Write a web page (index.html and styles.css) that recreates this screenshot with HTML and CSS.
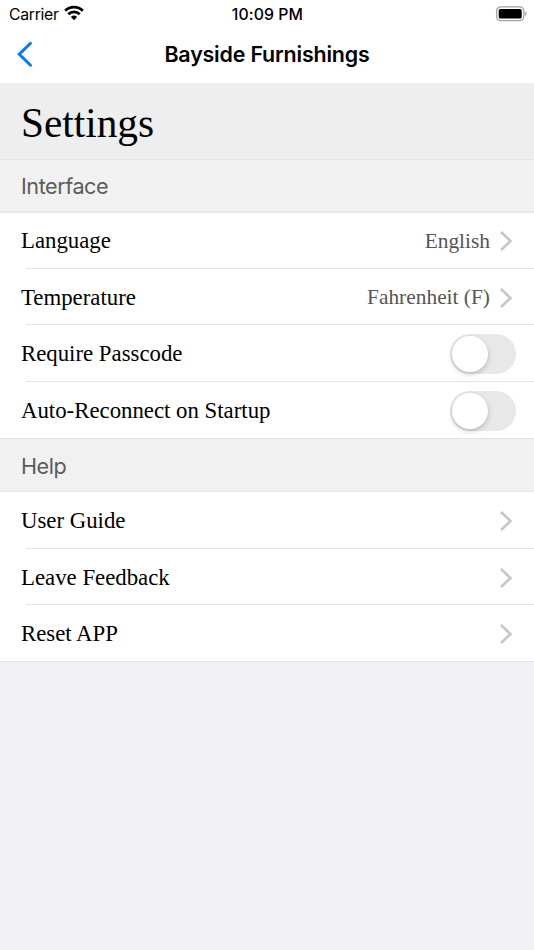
FILE: index.html
```
<!DOCTYPE html>
<html lang="en">
<head>
<meta charset="utf-8">
<title>Settings</title>
<link rel="stylesheet" href="styles.css">
</head>
<body>
<header class="top">
  <div class="status">
    <div class="carrier"><span class="carrier-name">Carrier</span>
      <svg class="wifi" width="20" height="16" viewBox="0 0 20 16" fill="none" stroke="#000" stroke-width="2.9"><path d="M1.2 5.7a12.6 12.6 0 0 1 17.6 0"/><path d="M4.3 9.2a8.2 8.2 0 0 1 11.4 0"/><path d="M10 15.2 6.9 12a4.5 4.5 0 0 1 6.2 0Z" fill="#000" stroke="none"/></svg>
    </div>
    <span class="time">10:09 PM</span>
    <svg class="battery" width="33" height="16" viewBox="0 0 33 16"><rect x="2.6" y=".8" width="27.2" height="13.8" rx="4" fill="none" stroke="#a3a3a3" stroke-width="1.3"/><rect x="4.7" y="2.9" width="23" height="9.6" rx="1.6" fill="#000"/><path d="M31.2 5.2c2.1.7 2.1 4.1 0 4.8Z" fill="#a3a3a3"/></svg>
  </div>
  <nav class="nav">
    <svg class="back" width="18" height="28" viewBox="0 0 18 28" fill="none" stroke="#007aff" stroke-width="3" stroke-linecap="round" stroke-linejoin="miter"><path d="M15.5 3.3 4.3 14.3l11.2 10.9"/></svg>
    <span class="title">Bayside Furnishings</span>
  </nav>
</header>
<main>
  <h1>Settings</h1>
  <h2>Interface</h2>
  <ul class="list">
    <li class="row"><span class="label">Language</span><span class="value">English</span><svg class="chevron" viewBox="0 0 14 22"><path d="m2 2 9.5 9L2 20"/></svg></li>
    <li class="row"><span class="label">Temperature</span><span class="value">Fahrenheit (F)</span><svg class="chevron" viewBox="0 0 14 22"><path d="m2 2 9.5 9L2 20"/></svg></li>
    <li class="row"><span class="label">Require Passcode</span><span class="switch"></span></li>
    <li class="row"><span class="label">Auto-Reconnect on Startup</span><span class="switch"></span></li>
  </ul>
  <h2 class="help">Help</h2>
  <ul class="list">
    <li class="row"><span class="label">User Guide</span><svg class="chevron" viewBox="0 0 14 22"><path d="m2 2 9.5 9L2 20"/></svg></li>
    <li class="row"><span class="label">Leave Feedback</span><svg class="chevron" viewBox="0 0 14 22"><path d="m2 2 9.5 9L2 20"/></svg></li>
    <li class="row"><span class="label">Reset APP</span><svg class="chevron" viewBox="0 0 14 22"><path d="m2 2 9.5 9L2 20"/></svg></li>
  </ul>
</main>
</body>
</html>
```
FILE: styles.css
```
* { box-sizing: border-box; }
body {
  margin: 0;
  min-height: 950px;
  background: #f2f1f6;
  color: #000;
  font-family: Inter, "Liberation Sans", sans-serif;
}
.top { height: 83px; background: #fff; }
.status {
  display: grid;
  grid-template-columns: 1fr auto 1fr;
  align-items: center;
  height: 28px;
  padding: 0 7px 0 9px;
}
.carrier { display: flex; align-items: center; gap: 5px; }
.carrier-name { font-size: 15.8px; letter-spacing: -0.3px; }
.wifi { margin-top: -2px; }
.time { margin-right: 1px; font-size: 15.8px; font-weight: 500; letter-spacing: 0.1px; }
.battery { justify-self: end; margin-top: -1px; }
.nav {
  display: grid;
  grid-template-columns: 1fr auto 1fr;
  align-items: center;
  height: 55px;
  padding: 0 15px;
}
.back { margin-top: -3px; }
.title { margin-top: -3px; font-size: 21.4px; font-weight: 600; letter-spacing: -0.17px; }
h1, h2, .list { margin: 0; padding: 0; }
h1 {
  height: 76px;
  padding-left: 21px;
  background: #eee;
  font: 400 41.3px/80px "Liberation Serif", serif;
}
h2 {
  height: 54px;
  padding-left: 21px;
  border-top: 1px solid #e2e2e3;
  border-bottom: 2px solid #e8e8e8;
  background: #f1f1f1;
  color: #5c5c5c;
  font-size: 21.6px;
  font-weight: 400;
  letter-spacing: -0.45px;
  line-height: 53px;
}
.help { border-bottom-width: 1px; line-height: 55px; }
.list {
  height: 225px;
  display: grid;
  grid-template-rows: 56px 56px 57px 56px;
  list-style: none;
  background: #fff;
  font-family: "Liberation Serif", serif;
}
.help + .list {
  height: 170px;
  grid-template-rows: 57px 56px 56px;
  border-bottom: 1px solid #e3e3e6;
}
.row {
  display: flex;
  align-items: center;
  padding: 1px 18px 0 21px;
  background: linear-gradient(#e3e3e4, #e3e3e4) 26px 100% / 100% 1px no-repeat;
}
.row:first-child { padding-top: 0; }
.row:last-child { padding-top: 2px; background: none; }
.label { flex: 1; font-size: 22.8px; }
.value { margin-right: 9px; color: #555; font-size: 21.4px; }
.chevron {
  width: 14px;
  height: 22px;
  margin-right: 3px;
  fill: none;
  stroke: #c6c6ca;
  stroke-width: 2.6;
}
.switch {
  width: 66px;
  height: 40px;
  padding: 2px;
  border-radius: 20px;
  background: #e8e8e8;
}
.switch::before {
  content: "";
  display: block;
  width: 36px;
  height: 36px;
  border-radius: 50%;
  background: #fff;
  box-shadow: 0 2px 5px rgb(0 0 0 / 22%);
}
```
